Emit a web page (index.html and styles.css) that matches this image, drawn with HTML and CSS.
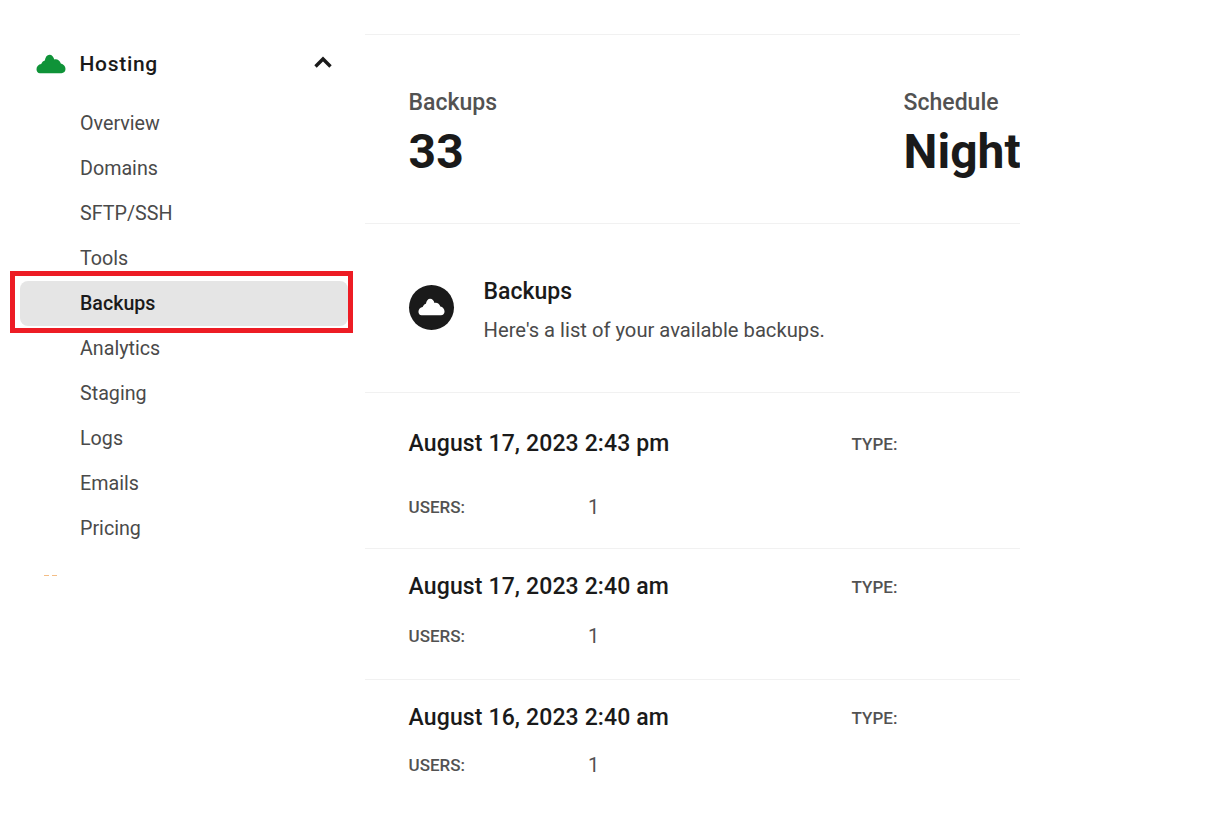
FILE: index.html
```html
<!DOCTYPE html>
<html lang="en">
<head>
<meta charset="utf-8">
<title>Backups</title>
<link rel="stylesheet" href="styles.css">
</head>
<body>
<div class="page">
  <aside class="sidebar">
    <div class="host-head">
      <svg class="host-cloud" viewBox="0 0 30 20" width="30" height="20"><path fill="#0f9338" d="M4 19.200C1.700 19.200.5 17.300.5 15.200.5 12.400 2.600 10.300 5.200 10 6 8 7.500 6.800 8.800 6.500 9.400 3 11 .7 13.500.7 16 .7 17.600 2.800 18.300 5.500 21 4.700 24 6.400 24.800 9.500 27.500 10 29.500 12.300 29.500 15.100 29.500 17.500 27.800 19.200 25.500 19.200Z"/></svg>
      <span class="host-title">Hosting</span>
      <svg class="host-chev" viewBox="0 0 18 12" width="18" height="12"><path d="M1.500 10.500 9 3l7.500 7.500" fill="none" stroke="#1a1a1a" stroke-width="3.400"/></svg>
    </div>
    <nav class="nav">
      <a class="nav-item">Overview</a>
      <a class="nav-item">Domains</a>
      <a class="nav-item">SFTP/SSH</a>
      <a class="nav-item">Tools</a>
      <a class="nav-item active">Backups</a>
      <a class="nav-item">Analytics</a>
      <a class="nav-item">Staging</a>
      <a class="nav-item">Logs</a>
      <a class="nav-item">Emails</a>
      <a class="nav-item">Pricing</a>
    </nav>
    <div class="peek"><span></span><span></span></div>
    <div class="highlight"></div>
  </aside>
  <main class="main">
    <section class="stats">
      <div class="stat stat-a"><div class="stat-label">Backups</div><div class="stat-value">33</div></div>
      <div class="stat"><div class="stat-label">Schedule</div><div class="stat-value">Nightly</div></div>
    </section>
    <section class="intro">
      <div class="intro-icon"><svg viewBox="0 0 30 20" width="27" height="18"><path fill="#fff" d="M4 19.200C1.700 19.200.5 17.300.5 15.200.5 12.400 2.600 10.300 5.200 10 6 8 7.500 6.800 8.800 6.500 9.400 3 11 .7 13.500.7 16 .7 17.600 2.800 18.300 5.500 21 4.700 24 6.400 24.800 9.500 27.500 10 29.500 12.300 29.500 15.100 29.500 17.500 27.800 19.200 25.500 19.200Z"/></svg></div>
      <div class="intro-body">
        <h2 class="intro-title">Backups</h2>
        <p class="intro-text">Here's a list of your available backups.</p>
      </div>
    </section>
    <section class="row row-first">
      <div class="row-top"><h3 class="row-date">August 17, 2023 2:43 pm</h3><span class="label">TYPE:</span></div>
      <div class="row-bottom"><span class="label users">USERS:</span><span class="count">1</span></div>
    </section>
    <section class="row">
      <div class="row-top"><h3 class="row-date">August 17, 2023 2:40 am</h3><span class="label">TYPE:</span></div>
      <div class="row-bottom"><span class="label users">USERS:</span><span class="count">1</span></div>
    </section>
    <section class="row row-last">
      <div class="row-top"><h3 class="row-date">August 16, 2023 2:40 am</h3><span class="label">TYPE:</span></div>
      <div class="row-bottom"><span class="label users">USERS:</span><span class="count">1</span></div>
    </section>
  </main>
</div>
</body>
</html>
```
FILE: styles.css
```css
* { box-sizing: border-box; }
html, body { margin: 0; height: 100%; background: #fff; overflow: hidden; }
body { font-family: Roboto, "Liberation Sans", sans-serif; color: #1a1a1a; }
.page { display: flex; width: 1220px; height: 833px; }
.sidebar { position: relative; width: 365px; flex: none; padding: 41px 17px 0 20px; }
.host-head { display: flex; align-items: center; height: 45px; padding: 0 16px; }
.host-cloud { flex: none; margin-right: 14px; margin-left: -.5px; }
.host-title { flex: 1; font-size: 21px; font-weight: 500; letter-spacing: .7px; }
.host-chev { flex: none; margin-top: -4px; }
.nav { display: flex; flex-direction: column; margin-top: 15px; }
.nav-item { display: flex; align-items: center; height: 45px; padding-left: 60px; font-size: 19.7px; color: #4a4a4a; border-radius: 8px; }
.active { background: #e5e5e5; color: #1a1a1a; font-weight: 500; font-size: 19.6px; }
.peek { display: flex; gap: 3px; margin: 24px 0 0 24px; height: 1px; }
.peek span { width: 5px; height: 1px; background: #f4bd85; }
.highlight { position: absolute; left: 10px; top: 271px; width: 343px; height: 62px; border: 5px solid #ed1c24; }
.main { width: 655px; height: 780px; overflow: hidden; flex: none; padding-top: 34px; }
.stats { display: flex; height: 190px; padding: 55px 0 0 43.6px; border-top: 1px solid #f1f1f1; border-bottom: 1px solid #f1f1f1; overflow: hidden; }
.stat { flex: none; white-space: nowrap; }
.stat-a { width: 495px; }
.stat-label { font-size: 23px; font-weight: 500; color: #525252; line-height: 26px; }
.stat-value { font-size: 48px; font-weight: 700; line-height: 60px; margin-top: 6px; color: #1a1a1a; }
.intro { display: flex; align-items: center; gap: 29.6px; height: 169px; padding: 0 44px 2px; border-bottom: 1px solid #f1f1f1; }
.intro-icon { display: flex; align-items: center; justify-content: center; width: 45px; height: 45px; border-radius: 50%; background: #1a1a1a; flex: none; }
.intro-body { margin-top: 5px; }
.intro-title { margin: 0 0 12px; font-size: 23px; font-weight: 500; line-height: 28px; color: #1a1a1a; }
.intro-text { margin: 0; font-size: 20.2px; line-height: 24px; color: #4a4a4a; }
.row { padding: 24px 43.6px 0; border-bottom: 1px solid #f1f1f1; height: 131px; }
.row-first { height: 156px; padding-top: 37px; }
.row-top { display: flex; align-items: center; height: 28px; }
.row-date { margin: 0; width: 443px; flex: none; font-size: 23px; letter-spacing: .13px; font-weight: 500; line-height: 28px; color: #1a1a1a; }
.label { font-size: 17px; font-weight: 500; color: #525252; }
.row-bottom { display: flex; align-items: center; height: 24px; margin-top: 23px; }
.row-first .row-bottom { margin-top: 37px; }
.row-last .row-bottom { margin-top: 21px; }
.users { width: 179.5px; flex: none; }
.count { font-size: 20px; color: #525252; }
.row-last { border-bottom: 0; }
```
